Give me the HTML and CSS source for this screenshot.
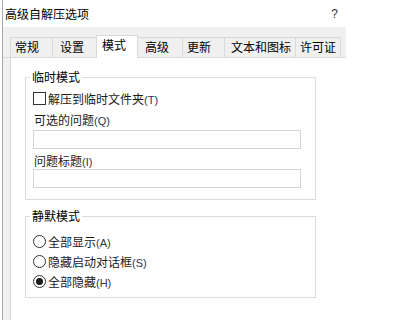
FILE: index.html
```html
<!DOCTYPE html>
<html lang="zh-CN">
<head>
    <meta charset="UTF-8">
    <title>高级自解压选项</title>
    <link rel="stylesheet" href="styles.css">
</head>
<body>
    <div class="window">
        <div class="titlebar">
            <span class="title">高级自解压选项</span>
            <span class="help">?</span>
        </div>

        <!-- Tabs -->
        <div class="tabstrip">
            <div class="tab">常规</div>
            <div class="tab">设置</div>
            <div class="tab active">模式</div>
            <div class="tab">高级</div>
            <div class="tab">更新</div>
            <div class="tab">文本和图标</div>
            <div class="tab">许可证</div>
        </div>

        <div class="main">
            <div class="gutter"></div>
            <div class="page">
                <fieldset class="group group-temp">
                    <legend>临时模式</legend>
                    <div class="option-row">
                        <span class="checkbox"></span>
                        <span>解压到临时文件夹<span class="key">(T)</span></span>
                    </div>
                    <div class="field-label">可选的问题<span class="key">(Q)</span></div>
                    <div class="textbox"></div>
                    <div class="field-label second">问题标题<span class="key">(I)</span></div>
                    <div class="textbox second"></div>
                </fieldset>

                <fieldset class="group group-silent">
                    <legend>静默模式</legend>
                    <div class="option-row radio-row">
                        <span class="radio"></span>
                        <span>全部显示<span class="key">(A)</span></span>
                    </div>
                    <div class="option-row radio-row">
                        <span class="radio"></span>
                        <span>隐藏启动对话框<span class="key">(S)</span></span>
                    </div>
                    <div class="option-row radio-row">
                        <span class="radio checked"></span>
                        <span>全部隐藏<span class="key">(H)</span></span>
                    </div>
                </fieldset>
            </div>
        </div>
    </div>
</body>
</html>
```

FILE: styles.css
```css
body {
    margin: 0;
    background: #fff;
    font-family: "Noto Sans CJK SC", "Microsoft YaHei", sans-serif;
    font-size: 12px;
    color: #1a1a1a;
}

.window {
    margin-left: 2px;
    width: 343px;
    height: 320px;
    border-left: 1px solid #a9a9a9;
    display: flex;
    flex-direction: column;
}

.titlebar {
    height: 27px;
    display: flex;
    align-items: center;
    justify-content: space-between;
    padding: 0 8px 0 2px;
    color: #000;
}

.help {
    font-family: "Liberation Sans", Arial, sans-serif;
    font-size: 12px;
    color: #333;
}

.tabstrip {
    height: 30px;
    background: #f0f0f0;
    border-bottom: 1px solid #dadada;
    display: flex;
    align-items: flex-end;
    padding-left: 7px;
}

.tab {
    box-sizing: border-box;
    height: 20px;
    line-height: 18px;
    padding-left: 5px;
    border: 1px solid #d9d9d9;
    border-bottom: none;
    margin-right: -1px;
    color: #000;
    white-space: nowrap;
}

.tab:nth-child(1) { width: 43px; padding-left: 4px; }
.tab:nth-child(2) { width: 45px; padding-left: 7px; }
.tab:nth-child(3) { width: 42px; }
.tab:nth-child(4) { width: 46px; padding-left: 7px; }
.tab:nth-child(5) { width: 43px; padding-left: 4px; }
.tab:nth-child(6) { width: 72px; padding-left: 6px; }
.tab:nth-child(7) { width: 46px; padding-left: 4px; }

.tab.active {
    height: 23px;
    line-height: 18px;
    background: #fff;
    margin-bottom: -1px;
    position: relative;
    z-index: 1;
}

.main {
    flex: 1;
    display: flex;
}

.gutter {
    width: 7px;
    background: #f0f0f0;
    border-right: 1px solid #d9d9d9;
}

.page {
    flex: 1;
    padding-left: 14px;
}

.group {
    box-sizing: border-box;
    width: 291px;
    margin: 0;
    border: 1px solid #dcdcdc;
    padding: 5px 8px 11px 8px;
}

.group legend {
    padding: 0 2px;
    margin-left: -4px;
    line-height: 16px;
    color: #000;
}

.group-temp {
    margin-top: 11px;
}

.group-silent {
    margin-top: 8px;
    padding-top: 7px;
    padding-bottom: 6px;
}

.option-row {
    height: 16px;
    display: flex;
    align-items: center;
    gap: 2px;
    margin-left: -1px;
}

.radio-row {
    height: 20px;
}

.checkbox {
    box-sizing: border-box;
    width: 13px;
    height: 13px;
    border: 1px solid #333;
    background: #fff;
}

.radio {
    box-sizing: border-box;
    width: 13px;
    height: 13px;
    border: 1px solid #333;
    border-radius: 50%;
    background: #fff;
    display: flex;
    align-items: center;
    justify-content: center;
}

.radio.checked::after {
    content: "";
    width: 7px;
    height: 7px;
    border-radius: 50%;
    background: #1a1a1a;
}

.key {
    font-family: "Liberation Sans", Arial, sans-serif;
    font-size: 11px;
    color: #2a3550;
}

.field-label {
    line-height: 16px;
    margin-top: 6px;
}

.field-label.second {
    margin-top: 4px;
}

.textbox {
    box-sizing: border-box;
    width: 268px;
    height: 19px;
    margin-left: -1px;
    margin-top: 1px;
    border: 1px solid #d4d4d4;
    background: #fff;
}

.textbox.second {
    margin-top: -1px;
}
```
